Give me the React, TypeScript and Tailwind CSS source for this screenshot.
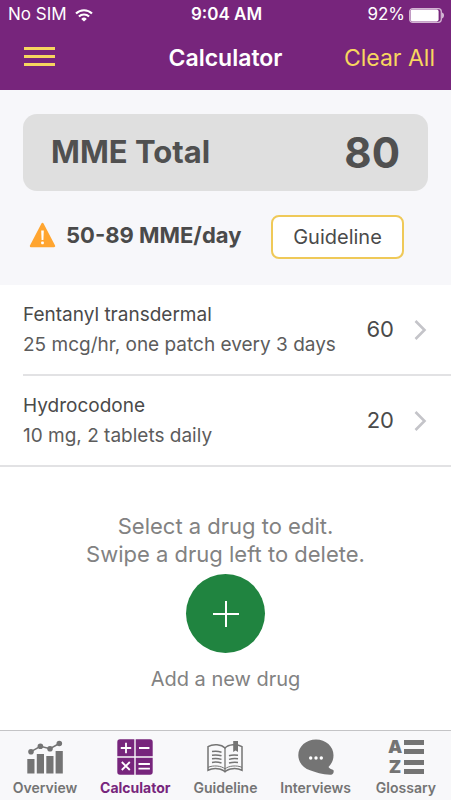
import type { ReactNode } from "react";

const DRUGS = [
  { name: "Fentanyl transdermal", dose: "25 mcg/hr, one patch every 3 days", mme: 60 },
  { name: "Hydrocodone", dose: "10 mg, 2 tablets daily", mme: 20 },
];

function WifiIcon() {
  return (
    <svg viewBox="0 0 18 13" className="h-[13px] w-[18px]" fill="none" stroke="currentColor" strokeWidth="2.1" aria-hidden="true">
      <path d="M1 4.6a11.4 11.4 0 0 1 16 0" />
      <path d="M3.9 7.6a7.3 7.3 0 0 1 10.2 0" />
      <path d="M9 12.6 6.2 9.9a4 4 0 0 1 5.6 0Z" fill="currentColor" stroke="none" />
    </svg>
  );
}

function BatteryIcon() {
  return (
    <svg viewBox="0 0 36 15" className="h-[15px] w-9" aria-hidden="true">
      <rect x="0.7" y="0.7" width="31.6" height="13.6" rx="3" fill="none" stroke="#d3b5d3" strokeWidth="1.3" />
      <rect x="1.6" y="1.6" width="28" height="11.8" rx="1.8" fill="#fff" />
      <path d="M33.2 4.6c2.2.6 2.2 5.2 0 5.8Z" fill="#e8d8e8" />
    </svg>
  );
}

function WarningIcon() {
  return (
    <svg viewBox="0 0 27 26" className="h-[26px] w-[27px] shrink-0" aria-hidden="true">
      <path d="M13.5 2 25 24H2Z" fill="#ffa530" stroke="#ffa530" strokeWidth="2.4" strokeLinejoin="round" />
      <path d="M12.2 8.6h2.6l-.4 9.4h-1.8Z" fill="#fff" />
      <rect x="12.2" y="19.6" width="2.6" height="2.6" rx="0.6" fill="#fff" />
    </svg>
  );
}

function OverviewIcon() {
  return (
    <svg viewBox="0 0 36 36" className="size-9" fill="currentColor" aria-hidden="true">
      <rect x="0.3" y="20" width="7.2" height="14.5" />
      <rect x="9.8" y="15" width="7.2" height="19.5" />
      <rect x="19.3" y="17" width="7.2" height="17.5" />
      <rect x="28.6" y="12" width="7.2" height="22.5" />
      <path d="M4 12.7 13.4 7.3 23 9.7 32.3 4.5" fill="none" stroke="currentColor" strokeWidth="1.5" />
      <circle cx="4" cy="12.7" r="2.8" />
      <circle cx="13.4" cy="7.3" r="2.8" />
      <circle cx="23" cy="9.7" r="2.8" />
      <circle cx="32.3" cy="4.5" r="2.8" />
    </svg>
  );
}

function CalculatorIcon() {
  return (
    <svg viewBox="0 0 36 36" className="size-9" aria-hidden="true">
      <g fill="currentColor">
        <path d="M3 .3h14.3v17H.3V3A2.7 2.7 0 0 1 3 .3Z" />
        <path d="M18.7.3H33A2.7 2.7 0 0 1 35.7 3v14.3h-17Z" />
        <path d="M.3 18.7h17v17H3A2.7 2.7 0 0 1 .3 33Z" />
        <path d="M18.7 18.7h17V33a2.7 2.7 0 0 1-2.7 2.7H18.7Z" />
      </g>
      <g stroke="#fff" strokeWidth="1.8" fill="none">
        <path d="M9 3.8v10.4M3.8 9h10.4M22 9h10.4" />
        <path d="m4.8 23 8 8m0-8-8 8" />
        <path d="M21.5 25h11.4M21.5 29.6h11.4" />
      </g>
    </svg>
  );
}

function GuidelineIcon() {
  return (
    <svg viewBox="0 0 36 36" className="size-9" fill="none" stroke="currentColor" strokeWidth="1.5" aria-hidden="true">
      <path d="M18 9C14.5 5.2 6 4.6 1 7.6v23.6c5-2.4 13.5-2.2 17 1.6 3.5-3.8 12-4 17-1.6V7.6c-5-3-13.5-2.4-17 1.4Z" />
      <path d="M1 28.4c5-2.4 13.5-1.8 17 1.6 3.5-3.4 12-4 17-1.6" strokeWidth="1" />
      <path d="M18 9v24" strokeWidth="1.3" />
      <path d="M5 12.6q5-.8 9.5.6M5 16.2q5-.8 9.5.6M5 19.8q5-.8 9.5.6M5 23.4q5-.8 9.5.6M22 16.8q3-1.3 9-.6M22 20.4q4.5-1.3 9-.6M22 24q4.5-1.3 9-.6" />
      <path d="M26.2 2h4.8v11l-2.4-1.6-2.4 1.6Z" fill="currentColor" stroke="none" />
    </svg>
  );
}

function InterviewsIcon() {
  return (
    <svg viewBox="0 0 36 36" className="size-9" aria-hidden="true">
      <path
        d="M18 .5c9.9 0 17.5 7 17.5 15.8 0 4.8-1.8 8.6-5 11.6.6 1.7 3.7 2.2 5 3.4.6 1.7-.2 4.2-2.2 4.4C25 36 18 33.2 12 31.3 5 29 .3 23 .3 16.3.3 7.5 8.1.5 18 .5Z"
        fill="currentColor"
      />
      <g fill="#fff">
        <circle cx="12.7" cy="19" r="1.7" />
        <circle cx="18" cy="19" r="1.7" />
        <circle cx="23.3" cy="19" r="1.7" />
      </g>
    </svg>
  );
}

function GlossaryIcon() {
  return (
    <span className="flex h-9 w-9 flex-col justify-between" aria-hidden="true">
      {["A", "Z"].map((letter) => (
        <span key={letter} className="flex h-4 items-center gap-0.5">
          <span className="w-3.5 text-center text-[18px] leading-4 font-black">{letter}</span>
          <span className="flex h-3.5 flex-1 flex-col justify-between">
            <span className="h-[5px] bg-current" />
            <span className="h-[5px] bg-current" />
          </span>
        </span>
      ))}
    </span>
  );
}

const TABS: { label: string; icon: ReactNode; active?: boolean }[] = [
  { label: "Overview", icon: <OverviewIcon /> },
  { label: "Calculator", icon: <CalculatorIcon />, active: true },
  { label: "Guideline", icon: <GuidelineIcon /> },
  { label: "Interviews", icon: <InterviewsIcon /> },
  { label: "Glossary", icon: <GlossaryIcon /> },
];

export default function App() {
  return (
    <div className="flex min-h-screen flex-col bg-white font-['Inter',sans-serif] text-[#4a4a4a]">
      <header className="bg-[#77257c] text-white">
        <div className="grid h-[30px] grid-cols-3 items-center pr-1.5 pl-2">
          <div className="flex items-center gap-2 text-[17px]">
            <span>No SIM</span>
            <WifiIcon />
          </div>
          <div className="text-center text-[17px] font-semibold">9:04 AM</div>
          <div className="flex items-center justify-end gap-1 text-[17px]">
            <span>92%</span>
            <BatteryIcon />
          </div>
        </div>
        <div className="grid h-[60px] grid-cols-[1fr_auto_1fr] items-center px-4 pb-1">
          <button type="button" aria-label="Menu" className="ml-2 flex w-[31px] flex-col gap-[5px] pb-1 text-[#f7d65f]">
            <span className="h-[3px] w-full bg-current" />
            <span className="h-[3px] w-full bg-current" />
            <span className="h-[3px] w-full bg-current" />
          </button>
          <h1 className="text-[23px] font-semibold">Calculator</h1>
          <button type="button" className="justify-self-end text-[23px] whitespace-nowrap text-[#f7d65f]">
            Clear All
          </button>
        </div>
      </header>

      <main className="flex-1">
        <section className="bg-[#f7f7fa] px-[23px] pt-6 pb-[26px]">
          <div className="flex h-[77px] items-center justify-between rounded-[14px] bg-[#dfdfdf] px-7 font-bold text-[#505050]">
            <span className="text-[31px]">MME Total</span>
            <span className="text-[42px]">80</span>
          </div>
          <div className="mt-6 flex items-center justify-between pr-6 pl-1.5">
            <div className="flex items-center gap-2.5 pb-1">
              <WarningIcon />
              <span className="text-[22px] font-bold whitespace-nowrap">50-89 MME/day</span>
            </div>
            <button
              type="button"
              className="h-11 w-[133px] rounded-lg border-2 border-[#efc958] bg-white text-[20px]"
            >
              Guideline
            </button>
          </div>
        </section>

        <ul>
          {DRUGS.map((drug) => (
            <li key={drug.name} className="group">
              <a
                href="#edit"
                className="ml-[23px] flex h-[91px] items-center justify-between border-b-2 border-[#e2e2e4] pr-6 group-last:ml-0 group-last:pl-[23px]"
              >
                <span className="flex flex-col text-[19px] leading-[30px]">
                  <span>{drug.name}</span>
                  <span className="text-[#5c5c5c]">{drug.dose}</span>
                </span>
                <span className="flex items-center gap-5">
                  <span className="text-[22px]">{drug.mme}</span>
                  <svg viewBox="0 0 13 20" className="h-5 w-[13px]" fill="none" stroke="#c4c4c9" strokeWidth="2.6" aria-hidden="true">
                    <path d="m1.5 1 9 9-9 9" />
                  </svg>
                </span>
              </a>
            </li>
          ))}
        </ul>

        <div className="flex flex-col items-center pt-[45px] text-center text-[#828282]">
          <p className="text-[22px] leading-7">
            Select a drug to edit.
            <br />
            Swipe a drug left to delete.
          </p>
          <button
            type="button"
            aria-labelledby="add-drug"
            className="mt-1.5 flex size-[79px] items-center justify-center rounded-full bg-[#208440] text-white"
          >
            <svg viewBox="0 0 26 26" className="size-[26px]" stroke="currentColor" strokeWidth="2" aria-hidden="true">
              <path d="M13 0v26M0 13h26" />
            </svg>
          </button>
          <p id="add-drug" className="mt-3 text-[20px] leading-7">
            Add a new drug
          </p>
        </div>
      </main>

      <nav className="grid h-[70px] grid-cols-5 border-t border-[#c4c4c6] bg-[#f8f8fa]">
        {TABS.map((tab) => (
          <a
            key={tab.label}
            href={`#${tab.label.toLowerCase()}`}
            aria-current={tab.active ? "page" : undefined}
            className="flex flex-col items-center gap-[3px] pt-2 text-[14px] leading-5 font-semibold text-[#747474] aria-[current=page]:font-bold aria-[current=page]:text-[#77257c]"
          >
            {tab.icon}
            {tab.label}
          </a>
        ))}
      </nav>
    </div>
  );
}
